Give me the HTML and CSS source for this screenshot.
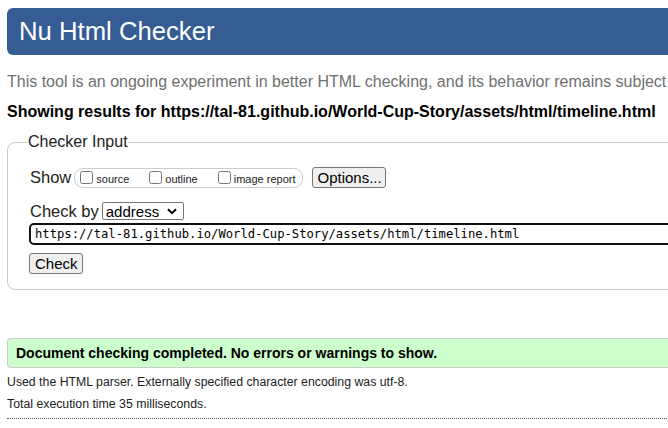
FILE: index.html
```html
<!DOCTYPE html>
<html lang="en">
<head>
<meta charset="utf-8">
<title>Showing results for https://tal-81.github.io/World-Cup-Story/assets/html/timeline.html - Nu Html Checker</title>
<link rel="stylesheet" href="styles.css">
</head>
<body>
<div class="page">
  <h1 class="banner">Nu Html Checker</h1>
  <p class="intro">This tool is an ongoing experiment in better HTML checking, and its behavior remains subject</p>
  <p class="showing">Showing results for https://tal-81.github.io/World-Cup-Story/assets/html/timeline.html</p>
  <form class="checker">
    <fieldset class="input-set">
      <legend class="legend">Checker Input</legend>
      <div class="row row-show">
        <span class="row-label">Show</span>
        <span class="opts">
          <label class="opt"><input type="checkbox" class="cb"><span class="opt-text">source</span></label>
          <label class="opt"><input type="checkbox" class="cb"><span class="opt-text">outline</span></label>
          <label class="opt"><input type="checkbox" class="cb"><span class="opt-text">image report</span></label>
        </span>
        <button type="button" class="btn btn-options">Options...</button>
      </div>
      <div class="row row-by">
        <span class="row-label">Check by</span>
        <span class="select-wrap">
          <select class="select"><option>address</option></select>
          <svg class="chev" width="10" height="7" viewBox="0 0 10 7"><path d="M1 1.2 L5 5.2 L9 1.2" fill="none" stroke="#000" stroke-width="2"/></svg>
        </span>
      </div>
      <div class="row row-url">
        <input class="url" type="text" value="https://tal-81.github.io/World-Cup-Story/assets/html/timeline.html">
      </div>
      <div class="row row-check">
        <button type="button" class="btn btn-check">Check</button>
      </div>
    </fieldset>
  </form>
  <p class="success">Document checking completed. No errors or warnings to show.</p>
  <p class="details">Used the HTML parser. Externally specified character encoding was utf-8.</p>
  <p class="details">Total execution time 35 milliseconds.</p>
  <hr class="dotted">
</div>
</body>
</html>
```
FILE: styles.css
```css
html, body {
  margin: 0;
  padding: 0;
  overflow: hidden;
  background: #fff;
}
body {
  font-family: "Liberation Sans", Arial, sans-serif;
  color: #000;
}
.page {
  width: 760px;
  padding: 8px 0 0 7px;
}
.banner {
  margin: 0;
  height: 47px;
  line-height: 46px;
  background: #365c94;
  color: #fff;
  font-weight: normal;
  font-size: 25.7px;
  padding-left: 12px;
  border-radius: 6px 0 0 6px;
}
.intro {
  margin: 17px 0 0;
  font-size: 16px;
  line-height: 19px;
  color: #707070;
  white-space: nowrap;
}
.showing {
  margin: 11px 0 0;
  font-size: 16px;
  line-height: 19px;
  font-weight: bold;
  white-space: nowrap;
}
.checker {
  margin: 12px 0 0;
}
.input-set {
  margin: 0;
  border: 1px solid #ccc;
  border-radius: 8px 0 0 8px;
  padding: 16px 0 15px 22px;
  min-width: 0;
}
.legend {
  font-size: 16px;
  color: #222;
  padding: 0;
  margin-left: -2px;
}
.row {
  display: flex;
  align-items: center;
}
.row-label {
  font-size: 16.5px;
  color: #222;
}
.row-show {
  height: 21px;
}
.opts {
  display: flex;
  align-items: center;
  height: 18px;
  margin-left: 3px;
  border: 1px solid #ccc;
  border-radius: 9px;
  padding: 0 6px 0 5px;
  gap: 20px;
}
.opt {
  display: flex;
  align-items: center;
}
.cb {
  margin: 0 3px 0 0;
  width: 13px;
  height: 13px;
}
.opt-text {
  font-size: 11px;
  color: #222;
  padding-top: 2px;
}
.btn {
  font-family: "Liberation Sans", Arial, sans-serif;
  font-size: 15px;
  background: #efefef;
  border: 1px solid #767676;
  border-radius: 3px;
  color: #000;
  padding: 0 5px;
  margin: 0;
}
.btn-options {
  margin-left: 9px;
  width: 74px;
  height: 21px;
}
.row-by {
  margin-top: 14px;
  height: 18px;
}
.select-wrap {
  position: relative;
  display: inline-block;
  margin-left: 3px;
}
.select {
  appearance: none;
  -webkit-appearance: none;
  width: 82px;
  height: 18px;
  border: 1px solid #767676;
  border-radius: 2px;
  background: #fff;
  font-family: "Liberation Sans", Arial, sans-serif;
  font-size: 15px;
  padding: 0 0 0 3px;
  color: #000;
  display: block;
}
.chev {
  position: absolute;
  right: 7px;
  top: 6px;
  pointer-events: none;
}
.row-url {
  margin-top: 3px;
  margin-left: -1px;
}
.url {
  width: 700px;
  height: 22px;
  box-sizing: border-box;
  border: 2px solid #101010;
  border-radius: 5px;
  font-family: "DejaVu Sans Mono", "Liberation Mono", monospace;
  font-size: 12.2px;
  padding: 0 0 0 4px;
  margin: 0;
  color: #000;
  outline: none;
}
.row-check {
  margin-top: 8px;
  margin-left: -1px;
}
.btn-check {
  width: 54px;
  height: 21px;
}
.success {
  margin: 48px 0 0;
  height: 28px;
  line-height: 28px;
  background: #ccffcc;
  border: 1px solid #ccc;
  border-right: none;
  border-radius: 4px 0 0 4px;
  padding-left: 8px;
  font-weight: bold;
  font-size: 14px;
  white-space: nowrap;
}
.details {
  margin: 7px 0 0;
  font-size: 12.3px;
  line-height: 14px;
  color: #222;
}
.details + .details {
  margin-top: 8px;
}
.dotted {
  margin: 7px 0 0;
  border: none;
  border-top: 1px dotted #555;
  height: 0;
}
```
